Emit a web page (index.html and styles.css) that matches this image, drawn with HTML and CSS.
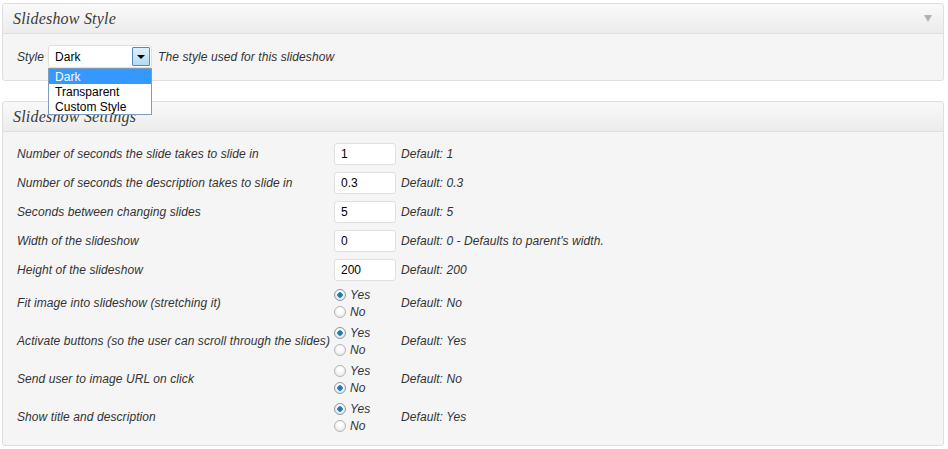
FILE: index.html
```html
<!DOCTYPE html>
<html>
<head>
<meta charset="utf-8">
<link rel="stylesheet" href="styles.css">
</head>
<body>
<div class="page">
  <div class="panel">
    <div class="panel-head">
      <h3 class="panel-title">Slideshow Style</h3>
      <span class="toggle"></span>
    </div>
    <div class="panel-body style-body">
      <div class="style-row">
        <span class="lbl">Style</span>
        <div class="select-wrap">
          <div class="select">
            <span class="select-value">Dark</span>
            <span class="select-btn"><span class="select-arrow"></span></span>
          </div>
          <ul class="dropdown">
            <li class="opt active">Dark</li>
            <li class="opt">Transparent</li>
            <li class="opt">Custom Style</li>
          </ul>
        </div>
        <span class="lbl">The style used for this slideshow</span>
      </div>
    </div>
  </div>

  <div class="panel panel-settings">
    <div class="panel-head">
      <h3 class="panel-title">Slideshow Settings</h3>
    </div>
    <div class="panel-body settings-body">
      <div class="row">
        <span class="lbl">Number of seconds the slide takes to slide in</span>
        <span class="field"><span class="text-input">1</span></span>
        <span class="lbl">Default: 1</span>
      </div>
      <div class="row">
        <span class="lbl">Number of seconds the description takes to slide in</span>
        <span class="field"><span class="text-input">0.3</span></span>
        <span class="lbl">Default: 0.3</span>
      </div>
      <div class="row">
        <span class="lbl">Seconds between changing slides</span>
        <span class="field"><span class="text-input">5</span></span>
        <span class="lbl">Default: 5</span>
      </div>
      <div class="row">
        <span class="lbl">Width of the slideshow</span>
        <span class="field"><span class="text-input">0</span></span>
        <span class="lbl">Default: 0 - Defaults to parent's width.</span>
      </div>
      <div class="row">
        <span class="lbl">Height of the slideshow</span>
        <span class="field"><span class="text-input">200</span></span>
        <span class="lbl">Default: 200</span>
      </div>
      <div class="row radio-row">
        <span class="lbl">Fit image into slideshow (stretching it)</span>
        <span class="radios">
          <span class="radio-line"><span class="radio checked"></span><span class="lbl">Yes</span></span>
          <span class="radio-line"><span class="radio"></span><span class="lbl">No</span></span>
        </span>
        <span class="lbl">Default: No</span>
      </div>
      <div class="row radio-row">
        <span class="lbl">Activate buttons (so the user can scroll through the slides)</span>
        <span class="radios">
          <span class="radio-line"><span class="radio checked"></span><span class="lbl">Yes</span></span>
          <span class="radio-line"><span class="radio"></span><span class="lbl">No</span></span>
        </span>
        <span class="lbl">Default: Yes</span>
      </div>
      <div class="row radio-row">
        <span class="lbl">Send user to image URL on click</span>
        <span class="radios">
          <span class="radio-line"><span class="radio"></span><span class="lbl">Yes</span></span>
          <span class="radio-line"><span class="radio checked"></span><span class="lbl">No</span></span>
        </span>
        <span class="lbl">Default: No</span>
      </div>
      <div class="row radio-row">
        <span class="lbl">Show title and description</span>
        <span class="radios">
          <span class="radio-line"><span class="radio checked"></span><span class="lbl">Yes</span></span>
          <span class="radio-line"><span class="radio"></span><span class="lbl">No</span></span>
        </span>
        <span class="lbl">Default: Yes</span>
      </div>
    </div>
  </div>
</div>
</body>
</html>
```

FILE: styles.css
```css
html, body {
  margin: 0;
  padding: 0;
  background: #ffffff;
}

.page {
  padding: 3px 4px 0 2px;
  font-family: "Liberation Sans", Arial, sans-serif;
  font-size: 12px;
  color: #333333;
}

.panel {
  border: 1px solid #dfdfdf;
  border-radius: 3px;
  background: #f5f5f5;
}

.panel-settings {
  margin-top: 20px;
}

.panel-head {
  height: 29px;
  border-bottom: 1px solid #dfdfdf;
  background: linear-gradient(to bottom, #f9f9f9, #ececec);
  border-radius: 3px 3px 0 0;
  display: flex;
  align-items: center;
  justify-content: space-between;
  padding: 0 10px 0 10px;
}

.panel-title {
  margin: 0;
  font-family: "Liberation Serif", "Times New Roman", serif;
  font-style: italic;
  font-weight: normal;
  font-size: 16px;
  letter-spacing: 0.2px;
  color: #3a3a3a;
}

.toggle {
  width: 0;
  height: 0;
  border-left: 4px solid transparent;
  border-right: 4px solid transparent;
  border-top: 7px solid #b2b2b2;
  margin-right: 1px;
}

.lbl {
  font-style: italic;
  letter-spacing: 0.08px;
}

.style-body {
  height: 46px;
  padding: 0 14px;
}

.style-row {
  display: flex;
  align-items: center;
  height: 45px;
}

.select-wrap {
  position: relative;
  margin: 0 6px 0 4px;
}

.select {
  width: 102px;
  height: 21px;
  border: 1px solid #dfdfdf;
  border-radius: 3px;
  background: #ffffff;
  display: flex;
  align-items: center;
  justify-content: space-between;
}

.select-value {
  padding-left: 6px;
  color: #000000;
  font-style: normal;
}

.select-btn {
  width: 18px;
  height: 19px;
  margin-right: 1px;
  border: 1px solid #4e8cc0;
  border-radius: 1px;
  background: linear-gradient(to bottom, #dff0fb, #b3daf2);
  display: flex;
  align-items: center;
  justify-content: center;
  box-sizing: border-box;
}

.select-arrow {
  width: 0;
  height: 0;
  border-left: 4px solid transparent;
  border-right: 4px solid transparent;
  border-top: 4px solid #000000;
  margin-top: 1px;
}

.dropdown {
  position: absolute;
  left: 0;
  top: 23px;
  width: 102px;
  margin: 0;
  padding: 0;
  list-style: none;
  background: #ffffff;
  border: 1px solid #7f9db9;
  z-index: 5;
}

.opt {
  height: 15px;
  line-height: 16px;
  padding-left: 6px;
  color: #000000;
  font-style: normal;
}

.opt.active {
  background: #3399ff;
  color: #ffffff;
}

.settings-body {
  padding: 7px 14px 9px 14px;
}

.row {
  display: grid;
  grid-template-columns: 317px 67px 1fr;
  align-items: center;
  height: 29px;
}

.radio-row {
  height: 38px;
}

.field {
  display: flex;
  align-items: center;
}

.text-input {
  box-sizing: border-box;
  width: 62px;
  height: 22px;
  border: 1px solid #dfdfdf;
  border-radius: 3px;
  background: #ffffff;
  padding-left: 6px;
  line-height: 20px;
  color: #000000;
  font-style: normal;
}

.radios {
  display: flex;
  flex-direction: column;
}

.radio-line {
  display: flex;
  align-items: center;
  height: 17px;
}

.radio-line .lbl {
  padding-left: 4px;
}

.radio {
  box-sizing: border-box;
  width: 12px;
  height: 12px;
  border-radius: 50%;
  border: 1px solid #b5b5b5;
  background: radial-gradient(circle at 50% 35%, #ffffff 20%, #e2e2e2 100%);
}

.radio.checked {
  border-color: #8a9aa6;
  background:
    radial-gradient(circle at 50% 50%, #1e6fa3 0, #2a86bf 2.5px, rgba(255,255,255,0) 3px),
    radial-gradient(circle at 50% 35%, #ffffff 20%, #dcdcdc 100%);
}
```
